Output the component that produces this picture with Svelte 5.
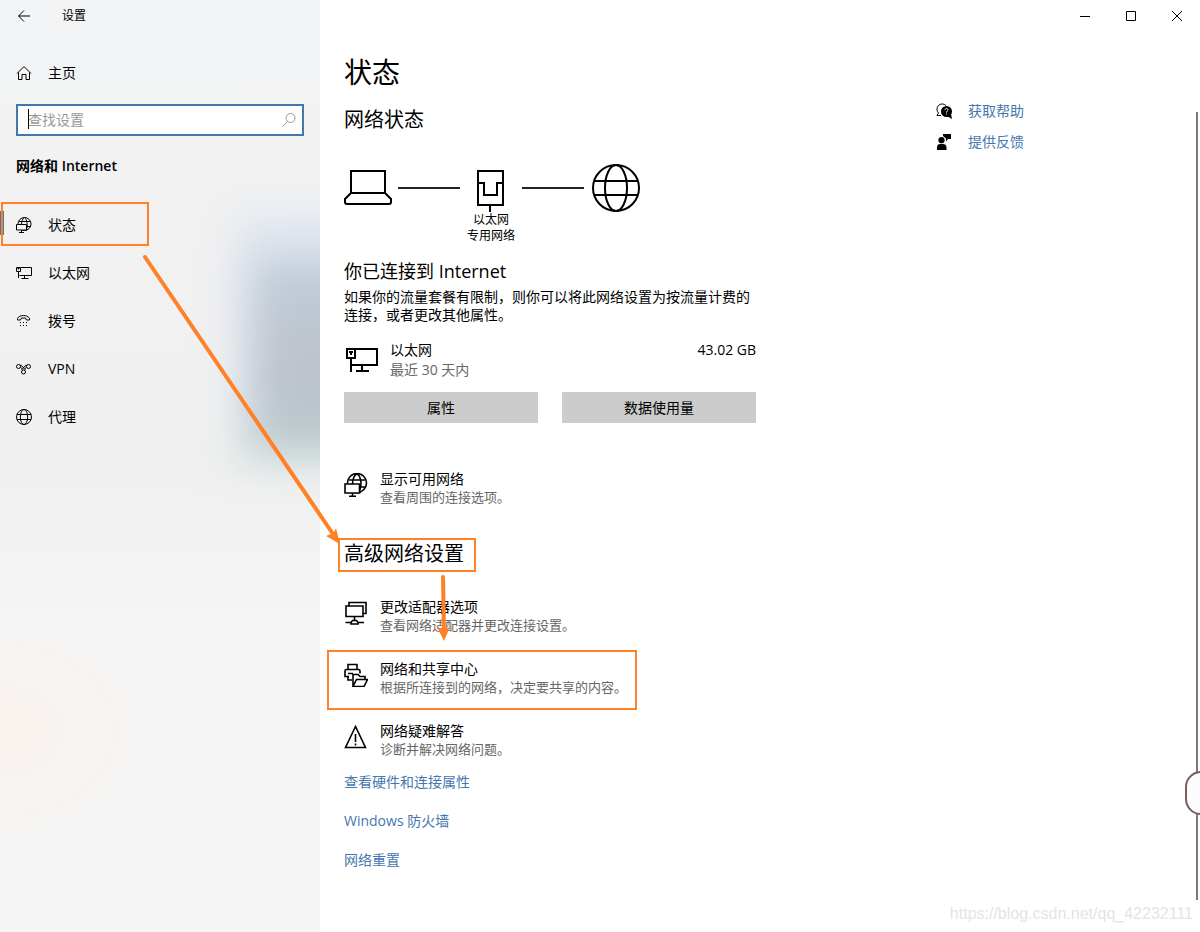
<script lang="ts">
  const navItems = [
    { id: "status", label: "状态", active: true },
    { id: "ethernet", label: "以太网", active: false },
    { id: "dialup", label: "拨号", active: false },
    { id: "vpn", label: "VPN", active: false },
    { id: "proxy", label: "代理", active: false },
  ];

  const advanced = [
    { id: "adapter", title: "更改适配器选项", desc: "查看网络适配器并更改连接设置。", marked: false },
    { id: "sharing", title: "网络和共享中心", desc: "根据所连接到的网络，决定要共享的内容。", marked: true },
    { id: "trouble", title: "网络疑难解答", desc: "诊断并解决网络问题。", marked: false },
  ];

  const links = ["查看硬件和连接属性", "Windows 防火墙", "网络重置"];

  let query = $state("");
</script>

{#snippet navIcon(id: string)}
  {#if id === "status"}
    <svg class="icon16" viewBox="0 0 16 16" aria-hidden="true">
      <circle cx="8.5" cy="7" r="6.5" />
      <path d="M3 4.5h11.500M10 9.500h5M5.500 7.500C5.500 4 6.500 2 8.500.500C11 2.500 12 8 10.500 12.500" />
      <path class="cover side" d="M.5 7.500h10v5.500H.5z" />
      <path d="M5.500 13v2.500M3 15.500h5" />
    </svg>
  {:else if id === "ethernet"}
    <svg class="icon16" viewBox="0 0 16 16" aria-hidden="true">
      <path d="M5 2.500h10.500v8H3.500M2.500 6v7M8.500 10.500v3M5.500 13.500h7" />
      <path d="M.5 2.500h4v4h-4zM1.500 3.500h2M2.500 3.500v1" />
    </svg>
  {:else if id === "dialup"}
    <svg class="icon16" viewBox="0 0 16 16" aria-hidden="true">
      <path d="M1.500 7V5.500C3 1.500 12 1.500 13.500 5.500V7h-3l-1-2h-4l-1 2z" />
      <path class="solid" d="M4 9h1v1H4zM7 9h1v1H7zM10 9h1v1h-1zM4 12h1v1H4zM7 12h1v1H7zM10 12h1v1h-1z" />
    </svg>
  {:else if id === "vpn"}
    <svg class="icon16" viewBox="0 0 16 16" aria-hidden="true">
      <circle cx="2.5" cy="5.5" r="2" />
      <circle cx="12.5" cy="5.500" r="2" />
      <circle cx="7.5" cy="11" r="2" />
      <path d="M4 4l2 1 3.500 4M11 4L9 5 5.500 9M4.500 6.500L6 7.500M10.500 6.500L9 7.500" />
    </svg>
  {:else}
    <svg class="icon16" viewBox="0 0 16 16" aria-hidden="true">
      <circle cx="8" cy="8" r="7.5" />
      <ellipse cx="8" cy="8" rx="3.7" ry="7.5" />
      <path d="M1 5.500h14M1 10.500h14" />
    </svg>
  {/if}
{/snippet}

<div class="window">
  <aside class="sidebar">
    <header class="titlebar">
      <button class="back" aria-label="返回">
        <svg class="icon16" viewBox="0 0 16 16" aria-hidden="true">
          <path d="M14 8H2.500M8 2.500L2.500 8L8 13.500" />
        </svg>
      </button>
      <span>设置</span>
    </header>

    <a class="home" href="#home">
      <svg class="icon16" viewBox="0 0 16 16" aria-hidden="true">
        <path d="M1 8.500L8 1.500l7 7M2.500 7.500v7h3.500v-5h4v5h3.500v-7" />
      </svg>
      主页
    </a>

    <label class="search">
      <input type="text" placeholder="查找设置" aria-label="查找设置" bind:value={query} />
      <span class="caret"></span>
      <svg class="icon16" viewBox="0 0 16 16" aria-hidden="true">
        <circle cx="9.5" cy="6" r="4.5" />
        <path d="M6.500 9.500L1.500 14.500" />
      </svg>
    </label>

    <h2 class="group">网络和 Internet</h2>

    <nav>
      {#each navItems as item}
        <a href="#{item.id}" class:active={item.active}>
          {@render navIcon(item.id)}
          {item.label}
        </a>
      {/each}
    </nav>
  </aside>

  <main>
    <div class="controls">
      <button aria-label="最小化">
        <svg viewBox="0 0 12 12" aria-hidden="true"><path d="M1 6.500h10" /></svg>
      </button>
      <button aria-label="最大化">
        <svg viewBox="0 0 12 12" aria-hidden="true"><path d="M1.500 1.500h9v9h-9z" /></svg>
      </button>
      <button aria-label="关闭">
        <svg viewBox="0 0 12 12" aria-hidden="true"><path d="M1 1l10 10M11 1L1 11" /></svg>
      </button>
    </div>

    <div class="page">
      <div class="content">
        <h1>状态</h1>
        <h2>网络状态</h2>

        <div class="diagram">
          <svg class="node" viewBox="0 0 48 48" aria-hidden="true">
            <path d="M7 7h34v22H7zM7 29l-6 6v3q0 2 2 2h42q2 0 2-2v-3L41 29" />
          </svg>
          <span class="wire"></span>
          <div class="hub">
            <svg class="node" viewBox="0 0 48 48" aria-hidden="true">
              <path d="M11 7h25v34H11zM11 19h6v12h13V19h6M23 41v7" />
            </svg>
            <span>以太网</span>
            <span>专用网络</span>
          </div>
          <span class="wire"></span>
          <svg class="node globe" viewBox="0 0 48 48" aria-hidden="true">
            <circle cx="24" cy="24" r="23" />
            <ellipse cx="24" cy="24" rx="11" ry="23" />
            <path d="M2 17h44M2 31h44" />
          </svg>
        </div>

        <h3>你已连接到 Internet</h3>
        <p class="note">如果你的流量套餐有限制，则你可以将此网络设置为按流量计费的连接，或者更改其他属性。</p>

        <div class="usage">
          <svg class="adapter" viewBox="0 0 34 28" aria-hidden="true">
            <path d="M10 4h22v16H6M6 13v14M17 20v6M11 26h13" />
            <path d="M2 4h8v9H2zM4 7h4M6 7v3" />
          </svg>
          <div class="usage-name">
            <span>以太网</span>
            <span class="muted">最近 30 天内</span>
          </div>
          <span>43.02 GB</span>
        </div>

        <div class="actions">
          <button>属性</button>
          <button>数据使用量</button>
        </div>

        <a class="item" href="#available">
          <svg class="icon24" viewBox="0 0 24 24" aria-hidden="true">
            <circle cx="13" cy="10" r="9.5" />
            <path d="M4.500 7h17M15 14h7M8.500 11C8.500 6 10 2.500 13 .500C16.500 3 18.500 10 15.500 18" />
            <path class="cover" d="M1 11h14.500v9H1z" />
            <path d="M8.500 20v3M5 23.200h7" />
          </svg>
          <span class="item-text">
            <span>显示可用网络</span>
            <small>查看周围的连接选项。</small>
          </span>
        </a>

        <h2 class="advanced marked">高级网络设置</h2>

        <div class="list">
          {#each advanced as item}
            <a class="item" class:marked={item.marked} href="#{item.id}">
              <svg class="icon24" viewBox="0 0 24 24" aria-hidden="true">
                {#if item.id === "adapter"}
                  <path d="M5 5V1.500h17v11h-3" />
                  <path d="M2 5h17v10.500H2zM10.500 15.500v4M1.500 21.500h5.500l1.500-2h4l1.500 2h6M7 21.500v1.500h7v-1.500" />
                {:else if item.id === "sharing"}
                  <path d="M4 6.500V1.500h9v5M5 13.500H1v-5.500q0-1.500 1.500-1.500h12q1.500 0 1.500 1.500v2.500M4 13.500v3.500h4M4 10.500h5" />
                  <path d="M9 23.500V11.500h5l2 2h5v3M9 23.500l3.500-7h11l-3.500 7z" />
                {:else}
                  <path d="M11.500 1.500L1.500 22.500h20z" />
                  <path d="M11.500 9v8M11.500 18.500v2" />
                {/if}
              </svg>
              <span class="item-text">
                <span>{item.title}</span>
                <small>{item.desc}</small>
              </span>
            </a>
          {/each}
        </div>

        <div class="links">
          {#each links as link}
            <a href="#more">{link}</a>
          {/each}
        </div>
      </div>

      <div class="support">
        <a href="#help">
          <svg class="icon16" viewBox="0 0 16 16" aria-hidden="true">
            <path d="M2.500 10A5 5 0 1 1 10 2.500M2.500 10L1 12.500h4" />
            <circle class="solid" cx="10.5" cy="8.5" r="5.5" />
            <path class="solid" d="M11 13l5 3-1-5z" />
            <path class="light" d="M9 7c0-2 3-2 3 0c0 1-1.500 1-1.500 2.500M10.500 10.500v1" />
          </svg>
          获取帮助
        </a>
        <a href="#feedback">
          <svg class="icon16" viewBox="0 0 16 16" aria-hidden="true">
            <circle class="solid" cx="5.5" cy="6.2" r="3.1" />
            <path class="solid" d="M1 16v-2.500Q1 10 4 10h3q3.500 0 3.500 3.500V16zM7 0h8v5h-3l-2 2.500V4.500L7 2z" />
          </svg>
          提供反馈
        </a>
      </div>
    </div>
  </main>

  <svg class="arrows" viewBox="0 0 480 660" aria-hidden="true">
    <path class="shaft" d="M145 257L333 534M443 577L444 632" />
    <path class="head" d="M340 544L326 536L331 534L334 532L336 528zM437 627l7 2l6-2l-6 14z" />
  </svg>
  <span class="scrollbar"></span>
  <span class="handle"></span>
  <span class="watermark">https://blog.csdn.net/qq_42232111</span>
</div>

<style>
  :global(body) {
    background: #fff;
  }

  .window {
    --accent: #4577ae;
    --mark: #ff8126;
    position: relative;
    display: flex;
    min-height: 100vh;
    overflow: hidden;
    color: #000;
    font-family: "Open Sans", "Noto Sans CJK SC", sans-serif;
    font-size: 14px;
    line-height: 20px;
  }

  a {
    color: inherit;
    text-decoration: none;
  }

  button {
    padding: 0;
    border: none;
    background: none;
    color: inherit;
    font: inherit;
  }

  h1,
  h2,
  h3,
  p {
    margin: 0;
    font-weight: 400;
  }

  svg {
    flex: none;
    fill: none;
    stroke: currentColor;
  }

  .icon16 {
    width: 16px;
    height: 16px;
  }

  .icon24 {
    width: 24px;
    height: 24px;
    margin-top: 3px;
    stroke-width: 1.6;
  }

  .cover {
    fill: #fff;
  }

  .cover.side {
    fill: #f2f2f2;
  }

  .solid {
    fill: #000;
    stroke: none;
  }

  .light {
    stroke: #fff;
  }

  .sidebar {
    position: relative;
    isolation: isolate;
    flex: none;
    width: 320px;
    overflow: hidden;
    background:
      radial-gradient(ellipse 160px 120px at 0 730px, #f9f2ed, transparent),
      linear-gradient(#f2f4f6, #f2f2f2 15%, #f0f0f0 50%, #f5f5f5 68%, #f5f5f5);
  }

  /* desktop colours showing through the acrylic */
  .sidebar::before,
  .sidebar::after {
    position: absolute;
    z-index: -1;
    content: "";
  }

  .sidebar::before {
    top: 215px;
    left: 235px;
    width: 160px;
    height: 250px;
    background: linear-gradient(#dfe5ef, #dbe1ea 75%, #d9e4e2);
    filter: blur(20px);
  }

  .sidebar::after {
    top: 260px;
    left: 255px;
    width: 160px;
    height: 190px;
    background: linear-gradient(#c2ced9, #bec5cf 40%, #bcc3ce 70%, #bccccb);
    filter: blur(18px);
  }

  .titlebar {
    display: flex;
    align-items: center;
    gap: 14px;
    height: 32px;
    font-size: 12px;
  }

  .back {
    display: grid;
    place-items: center;
    width: 48px;
    height: 32px;
  }

  .home {
    display: flex;
    align-items: center;
    gap: 16px;
    height: 40px;
    margin-top: 21px;
    padding-left: 16px;
  }

  .search {
    position: relative;
    display: flex;
    align-items: center;
    box-sizing: border-box;
    height: 32px;
    margin: 11px 16px 0;
    padding: 0 5px 0 10px;
    border: 2px solid var(--accent);
    background: #fff;
    color: #999;
  }

  .search input {
    flex: 1;
    min-width: 0;
    padding: 0;
    border: none;
    outline: none;
    background: none;
    font: inherit;
  }

  .search input::placeholder {
    color: #999;
  }

  .caret {
    position: absolute;
    top: 3px;
    left: 10px;
    width: 1px;
    height: 20px;
    background: #000;
  }

  nav a {
    position: relative;
    display: flex;
    align-items: center;
    gap: 16px;
    height: 48px;
    padding-left: 16px;
  }

  nav .active::before,
  nav .active::after {
    position: absolute;
    content: "";
  }

  nav .active::before {
    top: 10px;
    left: 0;
    width: 4px;
    height: 24px;
    background: var(--accent);
  }

  nav .active::after {
    top: 1px;
    left: 1px;
    box-sizing: border-box;
    width: 148px;
    height: 44px;
    border: 2px solid var(--mark);
  }

  main {
    flex: 1;
    min-width: 0;
  }

  .controls {
    display: flex;
    justify-content: flex-end;
    height: 32px;
  }

  .controls button {
    display: grid;
    place-items: center;
    width: 46px;
  }

  .controls svg {
    width: 12px;
    height: 12px;
  }

  .page {
    display: grid;
    grid-template-columns: minmax(0, 1fr) 264px;
    padding: 22px 0 62px 24px;
  }

  .content {
    max-width: 412px;
  }

  h1 {
    font-size: 28px;
    line-height: 36px;
  }

  h2 {
    font-size: 20px;
    line-height: 28px;
  }

  h1 + h2 {
    margin-top: 16px;
  }

  .group {
    margin: 20px 16px 25px;
    font-size: 14px;
    font-weight: 600;
    line-height: 20px;
  }

  .diagram {
    display: flex;
    align-items: flex-start;
    margin-top: 30px;
    font-size: 12px;
    line-height: 16px;
  }

  .node {
    width: 48px;
    height: 48px;
    stroke-width: 2;
  }

  .globe {
    margin-left: 8px;
  }

  .wire {
    width: 62px;
    height: 2px;
    margin-top: 23px;
    background: #222;
  }

  .node + .wire {
    margin-left: 6px;
  }

  .hub {
    display: flex;
    flex-direction: column;
    align-items: center;
    width: 62px;
  }

  h3 {
    margin-top: 15px;
    font-size: 18px;
    line-height: 24px;
  }

  .note {
    margin-top: 5px;
    line-height: 18px;
  }

  .usage {
    display: flex;
    align-items: flex-start;
    gap: 11px;
    margin-top: 16px;
  }

  .adapter {
    width: 34px;
    height: 28px;
    margin: 5px 0 0 1px;
    stroke-width: 2;
  }

  .usage-name {
    display: flex;
    flex: 1;
    flex-direction: column;
  }

  .muted {
    color: #666;
  }

  .actions {
    display: grid;
    grid-template-columns: 1fr 1fr;
    gap: 24px;
    margin: 12px 0 47px;
  }

  .actions button {
    height: 31px;
    background: #ccc;
  }

  .item {
    position: relative;
    display: flex;
    align-items: flex-start;
    gap: 12px;
    line-height: 18px;
  }

  .item-text {
    display: flex;
    flex-direction: column;
  }

  small {
    color: #666;
    font-size: 13px;
  }

  .advanced {
    position: relative;
    width: fit-content;
    margin: 34px 0 30px;
  }

  .marked::after {
    position: absolute;
    box-sizing: border-box;
    border: 2px solid var(--mark);
    content: "";
  }

  .advanced::after {
    inset: -2px -12px -4px -6px;
  }

  .item.marked::after {
    top: -10px;
    left: -17px;
    width: 310px;
    height: 60px;
  }

  .list {
    display: grid;
    gap: 26px;
  }

  .links {
    display: grid;
    justify-items: start;
    gap: 19px;
    margin-top: 14px;
    color: var(--accent);
  }

  .support {
    display: flex;
    flex-direction: column;
    gap: 11px;
    margin-top: 47px;
    color: var(--accent);
  }

  .support a {
    display: flex;
    align-items: center;
    gap: 16px;
  }

  .support svg {
    color: #000;
  }

  .arrows {
    position: absolute;
    top: 0;
    left: 0;
    width: 480px;
    height: 660px;
    pointer-events: none;
  }

  .shaft {
    stroke: var(--mark);
    stroke-width: 4;
    stroke-linecap: round;
  }

  .head {
    fill: var(--mark);
    stroke: none;
  }

  .scrollbar {
    position: absolute;
    top: 112px;
    right: 2px;
    bottom: 32px;
    width: 2px;
    background: #7a7a7a;
  }

  .handle {
    position: absolute;
    right: -20px;
    bottom: 117px;
    box-sizing: border-box;
    width: 35px;
    height: 44px;
    border: 2px solid #7d5b5b;
    border-radius: 16px;
    background: #fcfcfc;
  }

  .watermark {
    position: absolute;
    right: 7px;
    bottom: 8px;
    color: #e4e4e4;
    font-family: "Liberation Sans", sans-serif;
    font-size: 16px;
  }
</style>
